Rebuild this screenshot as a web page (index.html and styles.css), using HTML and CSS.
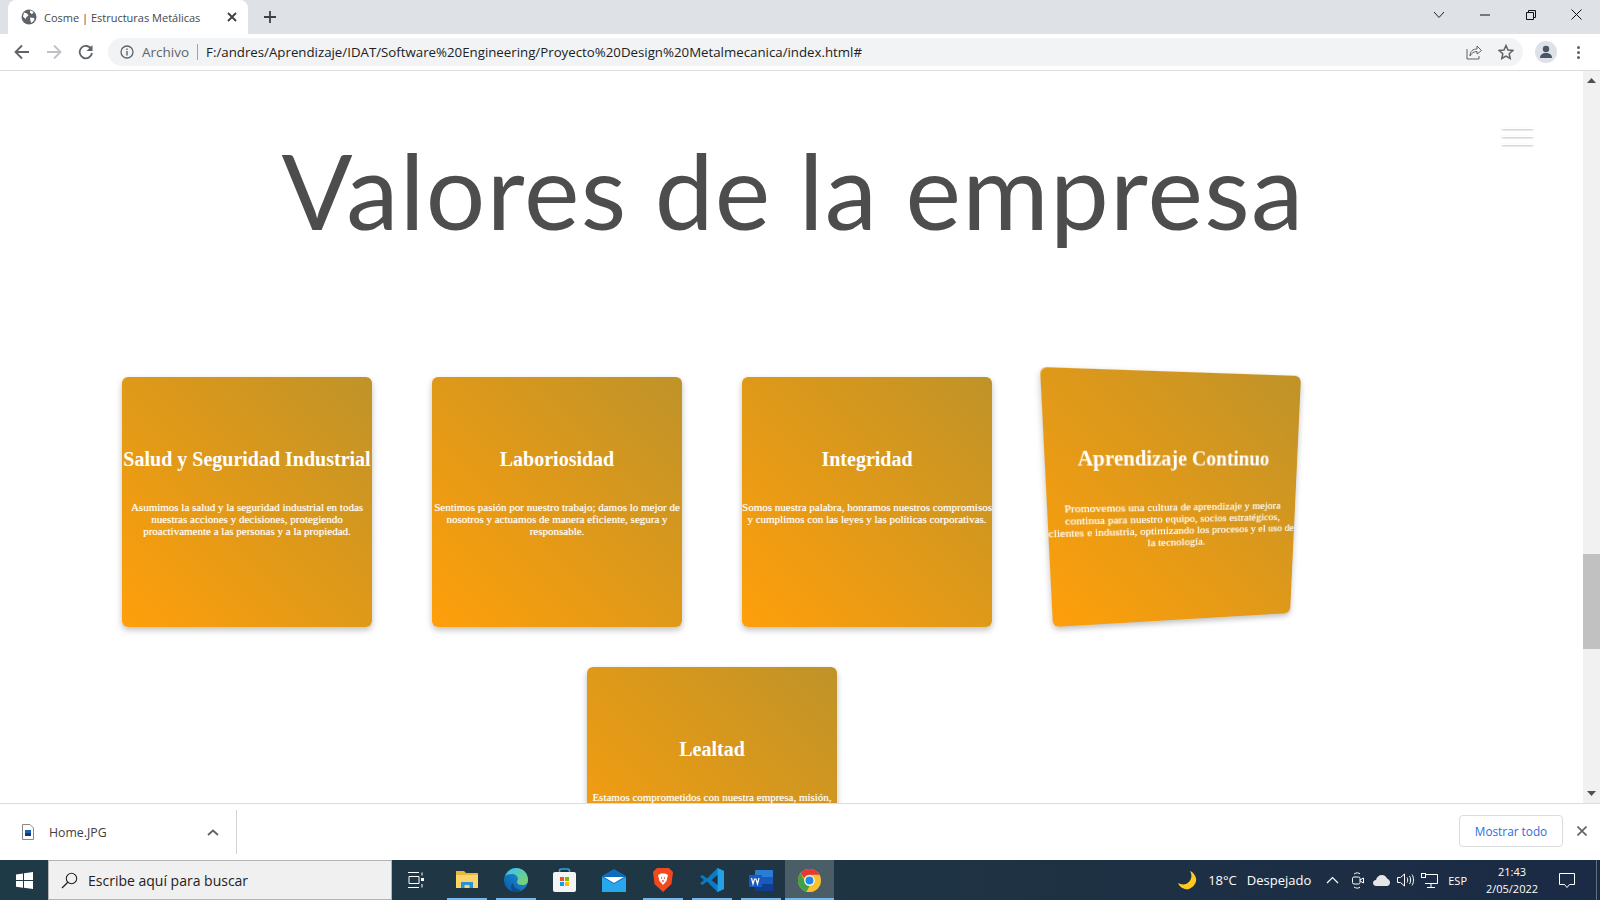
FILE: index.html
```html
<!DOCTYPE html>
<html lang="es">
<head>
    <meta charset="UTF-8">
    <title>Cosme | Estructuras Metálicas</title>
    <link rel="stylesheet" href="styles.css">
</head>
<body>
    <div class="tabstrip">
        <div class="tab">
            <svg class="tab-globe" width="16" height="16" viewBox="0 0 16 16"><circle cx="8" cy="8" r="7.5" fill="#5f6368"/><path d="M3 3.5l3 1 1.5 2-2 1.5-1 2-2.5-2.500zM9 1.5l2.5.5 1 2-2 1-1.500-1.500zM9 8.5l4 .5.5 2-3 3-1-2z" fill="#fff"/></svg>
            <span class="tab-title">Cosme | Estructuras Metálicas</span>
            <svg width="10" height="10" viewBox="0 0 10 10"><path d="M1 1l8 8M9 1l-8 8" stroke="#3c4043" stroke-width="1.8"/></svg>
        </div>
        <svg class="new-tab" width="14" height="14" viewBox="0 0 14 14"><path d="M7 1v12M1 7h12" stroke="#3c4043" stroke-width="1.8"/></svg>
        <div class="win-controls">
            <svg width="12" height="8" viewBox="0 0 12 8"><path d="M1 1l5 5.5L11 1" fill="none" stroke="#222" stroke-width="1"/></svg>
            <svg width="10" height="10" viewBox="0 0 10 10"><path d="M0 5h10" stroke="#111" stroke-width="1"/></svg>
            <svg width="10" height="10" viewBox="0 0 10 10"><path d="M.5 2.5h7v7h-7zM2.5 2.5v-2h7v7h-2" fill="none" stroke="#111" stroke-width="1"/></svg>
            <svg width="11" height="11" viewBox="0 0 11 11"><path d="M.5.5l10 10M10.5.5l-10 10" stroke="#111" stroke-width="1"/></svg>
        </div>
    </div>

    <div class="toolbar">
        <svg class="nav-btn" width="16" height="16" viewBox="0 0 16 16"><path d="M15 8H2M8 1.5L1.5 8 8 14.5" fill="none" stroke="#5f6368" stroke-width="1.8"/></svg>
        <svg class="nav-btn" width="16" height="16" viewBox="0 0 16 16"><path d="M1 8h13M8 1.5L14.5 8 8 14.5" fill="none" stroke="#bdc1c6" stroke-width="1.8"/></svg>
        <svg class="nav-btn" width="16" height="16" viewBox="0 0 16 16"><path d="M13.5 5.5A6.2 6.2 0 1 0 14 9" fill="none" stroke="#5f6368" stroke-width="1.8"/><path d="M14.5 1v6h-6z" fill="#5f6368"/></svg>
        <div class="omnibox">
            <svg width="14" height="14" viewBox="0 0 14 14"><circle cx="7" cy="7" r="6" fill="none" stroke="#5f6368" stroke-width="1.3"/><path d="M7 6v4.5M7 3.5v1.4" stroke="#5f6368" stroke-width="1.4"/></svg>
            <span class="omni-label">Archivo</span>
            <span class="omni-sep"></span>
            <span class="omni-url">F:/andres/Aprendizaje/IDAT/Software%20Engineering/Proyecto%20Design%20Metalmecanica/index.html#</span>
            <svg class="omni-share" width="16" height="16" viewBox="0 0 16 16"><path d="M1 5v10h12v-3" fill="none" stroke="#5f6368" stroke-width="1"/><path d="M4 12c0-5 3-7 7-7V2l4.5 4.5L11 10V7.5C8 7.5 5.5 9 4 12z" fill="none" stroke="#5f6368" stroke-width="1"/></svg>
            <svg width="16" height="16" viewBox="0 0 16 16"><path d="M8 1.5l2 4.5 4.8.5-3.600 3.200 1 4.800L8 12l-4.200 2.500 1-4.800L1.200 6.500 6 6z" fill="none" stroke="#5f6368" stroke-width="1.5"/></svg>
        </div>
        <div class="avatar">
            <svg width="14" height="14" viewBox="0 0 14 14"><circle cx="7" cy="4" r="3.2" fill="#4a5568"/><path d="M1 13c0-3.500 2.500-5 6-5s6 1.500 6 5z" fill="#4a5568"/></svg>
        </div>
        <div class="menu-dots"><i></i><i></i><i></i></div>
    </div>

    <div class="viewport">
        <main class="page">
            <div class="burger"><i></i><i></i><i></i></div>
            <h1 class="page-title">Valores de la empresa</h1>
            <section class="values">
                <article class="value-card">
                    <h2>Salud y Seguridad Industrial</h2>
                    <p>Asumimos la salud y la seguridad industrial en todas nuestras acciones y decisiones, protegiendo proactivamente a las personas y a la propiedad.</p>
                </article>
                <article class="value-card">
                    <h2>Laboriosidad</h2>
                    <p>Sentimos pasión por nuestro trabajo; damos lo mejor de nosotros y actuamos de manera eficiente, segura y responsable.</p>
                </article>
                <article class="value-card">
                    <h2>Integridad</h2>
                    <p>Somos nuestra palabra, honramos nuestros compromisos y cumplimos con las leyes y las políticas corporativas.</p>
                </article>
                <article class="value-card tilted">
                    <h2>Aprendizaje Continuo</h2>
                    <p>Promovemos una cultura de aprendizaje y mejora continua para nuestro equipo, socios estratégicos, clientes e industria, optimizando los procesos y el uso de la tecnología.</p>
                </article>
                <article class="value-card">
                    <h2>Lealtad</h2>
                    <p>Estamos comprometidos con nuestra empresa, misión, visión y valores, y con nuestros clientes.</p>
                </article>
            </section>
        </main>
        <div class="scrollbar">
            <svg width="9" height="5" viewBox="0 0 9 5"><path d="M4.5 0L9 5H0z" fill="#505050"/></svg>
            <div class="scroll-track"><div class="scroll-thumb"></div></div>
            <svg width="9" height="5" viewBox="0 0 9 5"><path d="M0 0h9L4.5 5z" fill="#505050"/></svg>
        </div>
    </div>

    <div class="downloads">
        <div class="dl-item">
            <svg width="12" height="16" viewBox="0 0 12 16"><path d="M.5.5H8L11.5 4v11.500H.5z" fill="#fff" stroke="#8a8a8a"/><rect x="3" y="6" width="6" height="6" fill="#1e5fb0"/><rect x="3" y="9" width="6" height="3" fill="#123a78"/></svg>
            <span class="dl-name">Home.JPG</span>
            <svg width="12" height="7" viewBox="0 0 12 7"><path d="M1 6l5-4.500L11 6" fill="none" stroke="#5f6368" stroke-width="1.8"/></svg>
        </div>
        <div class="dl-spacer"></div>
        <button class="dl-all" type="button">Mostrar todo</button>
        <svg class="dl-close" width="10" height="10" viewBox="0 0 10 10"><path d="M.5.5l9 9M9.5.5l-9 9" stroke="#5f6368" stroke-width="1.6"/></svg>
    </div>

    <footer class="taskbar">
        <div class="start">
            <svg width="17" height="17" viewBox="0 0 17 17"><path d="M0 2.400l7-1v6.700H0zM8 1.300L17 0v8.100H8zM0 9h7v6.700l-7-1zM8 9h9v8l-9-1.300z" fill="#fff"/></svg>
        </div>
        <div class="search">
            <svg width="17" height="17" viewBox="0 0 17 17"><circle cx="10.5" cy="6.5" r="5.2" fill="none" stroke="#222" stroke-width="1.1"/><path d="M6.800 10.200L1 16" stroke="#222" stroke-width="1.3"/></svg>
            <span>Escribe aquí para buscar</span>
        </div>
        <div class="task-view">
            <svg width="17" height="16" viewBox="0 0 17 16"><path d="M1 .5h11M1 15.5h11M2 4.5h10v7H2zM15 .5v3M15 12v3.500" fill="none" stroke="#fff" stroke-width="1"/><rect x="14" y="6" width="3" height="3" fill="#fff"/></svg>
        </div>
        <div class="task-apps">
            <div class="task-app open">
                <svg width="22" height="20" viewBox="0 0 22 20"><path d="M0 1h8l2 2h12v15H0z" fill="#e8b73c"/><path d="M0 5h22v13H0z" fill="#fbd568"/><path d="M5 18v-6h12v6h-3.500v-3h-5v3z" fill="#2a8fdc"/></svg>
            </div>
            <div class="task-app open">
                <svg width="24" height="24" viewBox="0 0 24 24"><defs><linearGradient id="edgeA" x1="0" y1="1" x2="1" y2="0"><stop offset="0" stop-color="#0c59a4"/><stop offset="1" stop-color="#1b9de2"/></linearGradient><linearGradient id="edgeB" x1="0" y1="0" x2="1" y2="1"><stop offset="0" stop-color="#35c1f1"/><stop offset="1" stop-color="#86d562"/></linearGradient></defs><circle cx="12" cy="12" r="12" fill="url(#edgeA)"/><path d="M1 9C3 2 9 0 12 0c7 0 12 5 12 12 0 3-2 5-6 5-3 0-5-1-5-3 0-1 1-2 1-3 0-3-3-5-6-5-3.500 0-6 1-7 3z" fill="url(#edgeB)"/><path d="M9 15c0 4 4 7 8 7-2 1.500-3 2-5 2-3 0-5-2-5-5 0-2 1-3 2-4z" fill="#134a8f"/></svg>
            </div>
            <div class="task-app">
                <svg width="23" height="24" viewBox="0 0 23 24"><path d="M6.500 6V2.500C6.500 1 8 1 9 1h5c1 0 2.500 0 2.500 1.500V6" fill="none" stroke="#29a8e8" stroke-width="1.6"/><rect y="4" width="23" height="20" rx="2" fill="#f4f4f4"/><rect x="7" y="9" width="4" height="4" fill="#f25022"/><rect x="12" y="9" width="4" height="4" fill="#7fba00"/><rect x="7" y="14" width="4" height="4" fill="#00a4ef"/><rect x="12" y="14" width="4" height="4" fill="#ffb900"/></svg>
            </div>
            <div class="task-app">
                <svg width="24" height="23" viewBox="0 0 24 23"><path d="M0 7l12-7 12 7v16H0z" fill="#0f6cbd"/><path d="M0 8l12 7 12-7v15H0z" fill="#28a8ea"/><path d="M2 8h20l-10 6z" fill="#fff"/></svg>
            </div>
            <div class="task-app open split">
                <svg width="20" height="24" viewBox="0 0 20 24"><path d="M4 0h12l4 4-1.500 12L10 24 1.500 16 0 4z" fill="#f1481f"/><path d="M5 7l3-1.500h4L15 7l-1.500 6-3.500 4-3.500-4z" fill="#fff"/><path d="M8 10h1M11 10h1M10 12v2" stroke="#f1481f" stroke-width="1.3"/></svg>
            </div>
            <div class="task-app open split">
                <svg width="24" height="24" viewBox="0 0 24 24"><path d="M17.500 0L24 3v18l-6.500 3L7 13.500 2.500 17 0 15.500 4 12 0 8.500 2.500 7 7 10.500z" fill="#0a7cc4"/><path d="M17.500 0L24 3v18l-6.500 3z" fill="#25a0e6"/><path d="M17.500 7l-6 5 6 5z" fill="#1f2f3d"/></svg>
            </div>
            <div class="task-app open">
                <svg width="24" height="21" viewBox="0 0 24 21"><rect x="6" width="18" height="21" rx="1" fill="#2b7cd3"/><rect x="6" y="7" width="18" height="7" fill="#185abd"/><rect x="6" y="14" width="18" height="7" fill="#103f91"/><rect y="5" width="13" height="12" fill="#185abd"/><path d="M2.500 8l1.500 6 1.500-5h1.500l1.500 5L10 8" fill="none" stroke="#fff" stroke-width="1.2"/></svg>
            </div>
            <div class="task-app open active">
                <svg width="23" height="23" viewBox="0 0 24 24"><circle cx="12" cy="12" r="12" fill="#fbc02d"/><path d="M12 0a12 12 0 0 1 10.400 6H12a6 6 0 0 0-5.500 3.500L2.600 4.500A12 12 0 0 1 12 0z" fill="#e53935"/><path d="M2.600 4.500l4.900 8.500a6 6 0 0 0 4.500 5l-3 5.600A12 12 0 0 1 2.600 4.500z" fill="#43a047"/><circle cx="12" cy="12" r="5.5" fill="#fff"/><circle cx="12" cy="12" r="4.2" fill="#1e88e5"/></svg>
            </div>
        </div>
        <div class="tray">
            <svg class="moon" width="19" height="19" viewBox="0 0 19 19"><path d="M12 0c3 5 1 11-4 13-3 1-6 0-8-1 2 5 7 7 11 6 5-2 8-7 7-11-1-3-3-6-6-7z" fill="#ffc91f"/></svg>
            <span class="tray-temp">18°C</span>
            <span class="tray-weather">Despejado</span>
            <svg class="tray-chevron" width="13" height="8" viewBox="0 0 13 8"><path d="M1 7l5.500-5.500L12 7" fill="none" stroke="#fff" stroke-width="1.2"/></svg>
            <svg class="tray-meet" width="12" height="17" viewBox="0 0 12 17"><path d="M2 2c2-1.500 5-1.500 6 0M2 15c2 1.500 5 1.500 6 0" fill="none" stroke="#fff"/><rect x=".5" y="5" width="7.5" height="7" rx="1.5" fill="none" stroke="#fff"/><path d="M8 8l3.500-2v5L8 9" fill="none" stroke="#fff"/></svg>
            <svg class="tray-cloud" width="17" height="11" viewBox="0 0 17 11"><path d="M3.500 11C1 11 0 9.500 0 8s1-3 3-3c.5-3 3-5 6-5 2.500 0 4 1.500 5 3.500 2 .5 3 2.500 3 4 0 2-1.500 3.500-3 3.500z" fill="#e6e6e6"/></svg>
            <svg class="tray-sound" width="17" height="14" viewBox="0 0 17 14"><path d="M.5 4.500h3L7.500 1v12l-4-3.500h-3z" fill="none" stroke="#fff"/><path d="M10 4.500c1 1.500 1 3.500 0 5M12.500 3c1.500 2 1.500 6 0 8M15 1.500c2 3 2 8 0 11" fill="none" stroke="#fff"/></svg>
            <svg class="tray-net" width="17" height="15" viewBox="0 0 17 15"><path d="M4 1.500h12.500v9H4M10 10.500v4M6 14.500h8" fill="none" stroke="#fff"/><rect x=".5" y=".5" width="4" height="4" fill="#1c2b45" stroke="#fff"/></svg>
            <span class="tray-lang">ESP</span>
            <div class="clock"><span>21:43</span><span>2/05/2022</span></div>
            <svg class="tray-note" width="16" height="15" viewBox="0 0 16 15"><path d="M.5.500h15v11h-5l-2.500 3-2.500-3h-5z" fill="none" stroke="#fff"/></svg>
            <span class="tray-peek"></span>
        </div>
    </footer>
</body>
</html>
```

FILE: styles.css
```css
* {
    box-sizing: border-box;
}
body {
    margin: 0;
    width: 1600px;
    height: 900px;
    overflow: hidden;
    display: flex;
    flex-direction: column;
    background-color: #fff;
    font-family: "Open Sans", "Noto Sans", sans-serif;
}

/* browser chrome */
.tabstrip {
    height: 34px;
    display: flex;
    align-items: center;
    background-color: #dee1e6;
}
.tab {
    width: 240px;
    height: 34px;
    margin-left: 8px;
    padding: 0 11px 0 13px;
    display: flex;
    align-items: center;
    background-color: #fff;
    border-radius: 8px 8px 0 0;
}
.tab-globe {
    flex: none;
}
.tab-title {
    flex: 1;
    margin-left: 7px;
    font-size: 11px;
    color: #45484c;
}
.new-tab {
    margin-left: 15px;
}
.win-controls {
    margin-left: auto;
    width: 167px;
    padding-right: 18px;
    display: flex;
    justify-content: space-between;
    align-items: center;
    margin-top: -5px;
}
.toolbar {
    height: 37px;
    padding: 0 0 0 14px;
    display: flex;
    align-items: center;
    background-color: #fff;
    border-bottom: 1px solid #dadce0;
}
.nav-btn {
    margin-right: 16px;
}
.omnibox {
    width: 1415px;
    height: 28px;
    margin-left: -2px;
    padding: 0 9px 0 12px;
    display: flex;
    align-items: center;
    background-color: #f1f3f4;
    border-radius: 14px;
}
.omni-label {
    margin-left: 8px;
    font-size: 13.5px;
    color: #5f6368;
}
.omni-sep {
    width: 1px;
    height: 16px;
    margin: 0 8px;
    background-color: #a0a4a8;
}
.omni-url {
    flex: 1;
    font-size: 13.27px;
    color: #202124;
}
.omni-share {
    margin-right: 16px;
}
.avatar {
    width: 22px;
    height: 22px;
    margin-left: 12px;
    display: flex;
    align-items: center;
    justify-content: center;
    background-color: #dee1e6;
    border-radius: 50%;
}
.menu-dots {
    margin-left: 20px;
    display: flex;
    flex-direction: column;
    gap: 2px;
}
.menu-dots i {
    width: 3px;
    height: 3px;
    background-color: #5f6368;
    border-radius: 50%;
}

/* page area */
.viewport {
    height: 733px;
    display: flex;
    border-bottom: 1px solid #dadce0;
}
.page {
    position: relative;
    width: 1583px;
    height: 100%;
    overflow: hidden;
    background-color: #fff;
}
.burger {
    position: absolute;
    top: 57px;
    right: 50px;
    width: 31px;
    display: flex;
    flex-direction: column;
    gap: 7px;
}
.burger i {
    height: 1px;
    background-color: #fff;
    box-shadow: 0 1px 2px rgba(0, 0, 0, 0.35);
}
.page-title {
    margin: 0;
    padding-top: 43px;
    padding-left: 3px;
    text-align: center;
    font-family: Lato, sans-serif;
    font-size: 105px;
    letter-spacing: 1.3px;
    word-spacing: -1px;
    line-height: 150px;
    font-weight: 400;
    color: #4d4d4d;
}
.values {
    width: 1240px;
    margin: 113px 0 0 92px;
    padding: 0 30px;
    display: flex;
    flex-wrap: wrap;
    justify-content: center;
    gap: 40px 60px;
}
.value-card {
    width: 250px;
    height: 250px;
    flex: none;
    padding-top: 69px;
    text-align: center;
    color: #fff;
    font-family: "Liberation Serif", serif;
    background: linear-gradient(45deg, #ff9f0a, #bf9329);
    border-radius: 6px;
    box-shadow: 0 3px 6px rgba(0, 0, 0, 0.25);
}
.value-card h2 {
    margin: 0;
    font-size: 20px;
    line-height: 26px;
    font-weight: bold;
    white-space: nowrap;
}
.value-card p {
    margin: 29px 0 0;
    font-size: 11px;
    line-height: 12px;
    text-shadow: 0 0 1px rgba(255, 255, 255, 0.6);
}
.tilted {
    transform-origin: 0 0;
    transform: matrix3d(1.14688, 0.03559, 0, 0.000413, 0.05242, 1.146, 0, 0.000424, 0, 0, 1, 0, -12, -10, 0, 1);
}
.scrollbar {
    width: 17px;
    display: flex;
    flex-direction: column;
    align-items: center;
    padding: 7px 0;
    background-color: #f1f1f1;
}
.scroll-track {
    flex: 1;
    width: 100%;
    padding-top: 471px;
}
.scroll-thumb {
    height: 95px;
    background-color: #c1c1c1;
}

/* downloads bar */
.downloads {
    height: 56px;
    padding: 0 13px 0 22px;
    display: flex;
    align-items: center;
    background-color: #fff;
}
.dl-item {
    width: 215px;
    height: 44px;
    display: flex;
    align-items: center;
    border-right: 1px solid #d5d5d5;
    padding-right: 17px;
}
.dl-name {
    flex: 1;
    margin-left: 15px;
    font-size: 12.3px;
    color: #3c4043;
}
.dl-spacer {
    flex: 1;
}
.dl-all {
    width: 104px;
    height: 32px;
    margin-top: -2px;
    background-color: #fff;
    border: 1px solid #dadce0;
    border-radius: 4px;
    font-family: "Open Sans", sans-serif;
    font-size: 11.8px;
    font-weight: 500;
    color: #2a6fe0;
}
.dl-close {
    margin-left: 14px;
    margin-top: -2px;
}

/* windows taskbar */
.taskbar {
    height: 40px;
    display: flex;
    align-items: center;
    background: linear-gradient(90deg, #1f3a47, #1f3543 50%, #1b2a45);
    color: #fff;
}
.start {
    width: 48px;
    display: flex;
    justify-content: center;
}
.search {
    width: 344px;
    height: 40px;
    padding-left: 12px;
    display: flex;
    align-items: center;
    gap: 10px;
    background-color: #f0f0f0;
    border: 1px solid #b5b5b5;
    font-size: 14px;
    color: #222;
}
.task-view {
    width: 50px;
    padding-right: 4px;
    display: flex;
    justify-content: center;
}
.task-apps {
    display: flex;
}
.task-app {
    position: relative;
    width: 49px;
    height: 40px;
    display: flex;
    align-items: center;
    justify-content: center;
}
.task-app.open::after {
    content: "";
    position: absolute;
    left: 5px;
    right: 4px;
    bottom: 0;
    height: 2px;
    background-color: #76b9ed;
}
.task-app.active {
    background-color: #4b5e68;
}
.task-app.active::after {
    left: 0;
    right: 0;
}
.tray {
    margin-left: auto;
    height: 40px;
    display: flex;
    align-items: center;
    font-size: 13px;
}
.tray-temp {
    margin-left: 11px;
}
.tray-weather {
    margin-left: 10px;
}
.tray-chevron {
    margin-left: 15px;
}
.tray-meet {
    margin-left: 13px;
}
.tray-cloud {
    margin-left: 9px;
}
.tray-sound {
    margin-left: 7px;
}
.tray-net {
    margin-left: 7px;
}
.tray-lang {
    margin-left: 10px;
    font-size: 11px;
}
.clock {
    width: 74px;
    margin-left: 8px;
    display: flex;
    flex-direction: column;
    align-items: center;
    font-size: 11px;
    line-height: 17px;
}
.tray-note {
    margin-left: 10px;
}
.tray-peek {
    width: 1px;
    height: 40px;
    margin-left: 21px;
    margin-right: 3px;
    background-color: #60707f;
}
```
